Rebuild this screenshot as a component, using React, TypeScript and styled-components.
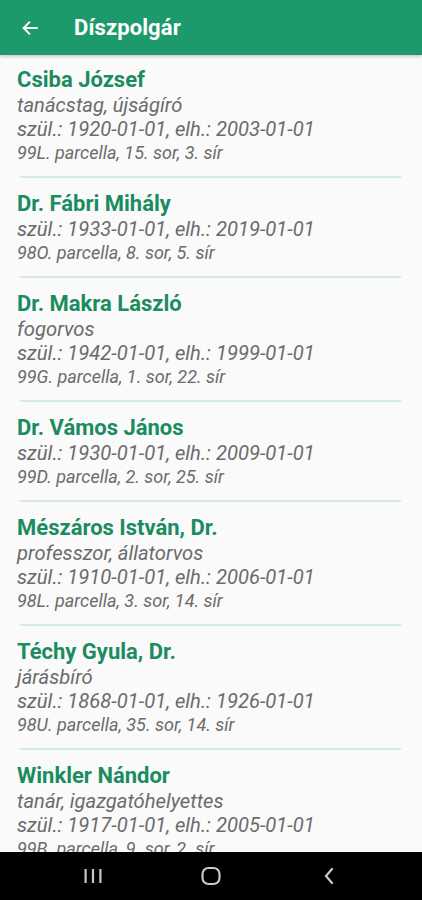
import React from "react";
import styled, { createGlobalStyle } from "styled-components";

const GlobalStyle = createGlobalStyle`
  html, body {
    margin: 0;
    padding: 0;
    background: #fafafa;
  }
  body {
    font-family: Roboto, "Liberation Sans", sans-serif;
  }
`;

const Screen = styled.div`
  width: 422px;
  height: 900px;
  display: flex;
  flex-direction: column;
  overflow: hidden;
  background: #fafafa;
`;

const AppBar = styled.header`
  height: 55px;
  flex: none;
  display: flex;
  align-items: center;
  background: #1d9a6c;
  box-shadow: 0 2px 3px rgba(0, 0, 0, 0.18);
  position: relative;
  z-index: 1;
`;

const BackButton = styled.div`
  width: 60px;
  display: flex;
  justify-content: center;
`;

const Title = styled.h1`
  margin: 0 0 0 14px;
  color: #ffffff;
  font-size: 22px;
  font-weight: 700;
  letter-spacing: 0.1px;
`;

const List = styled.div`
  flex: 1;
  overflow: hidden;
`;

const Item = styled.div<{ $first?: boolean }>`
  padding: ${(p) => (p.$first ? "12px" : "13px")} 17px 12px;
  display: flex;
  flex-direction: column;
`;

const Divider = styled.div`
  height: 2px;
  margin: 0 21px 0 20px;
  background: #d3ebe2;
`;

const Name = styled.div`
  color: #1b8c60;
  font-size: 22px;
  font-weight: 700;
  line-height: 26px;
  white-space: nowrap;
`;

const Line = styled.div<{ $small?: boolean }>`
  color: #6b6b6b;
  font-style: italic;
  font-size: ${(p) => (p.$small ? "18px" : "20.2px")};
  line-height: ${(p) => (p.$small ? "23px" : "24px")};
  white-space: nowrap;
`;

const NavBar = styled.nav`
  height: 48px;
  flex: none;
  background: #000;
  display: grid;
  grid-template-columns: repeat(3, 1fr);
  align-items: center;
  justify-items: center;
  padding: 0 34px;
`;

type Person = {
  name: string;
  role?: string;
  born: string;
  died: string;
  place: string;
};

const people: Person[] = [
  { name: "Csiba József", role: "tanácstag, újságíró", born: "1920-01-01", died: "2003-01-01", place: "99L. parcella, 15. sor, 3. sír" },
  { name: "Dr. Fábri Mihály", born: "1933-01-01", died: "2019-01-01", place: "98O. parcella, 8. sor, 5. sír" },
  { name: "Dr. Makra László", role: "fogorvos", born: "1942-01-01", died: "1999-01-01", place: "99G. parcella, 1. sor, 22. sír" },
  { name: "Dr. Vámos János", born: "1930-01-01", died: "2009-01-01", place: "99D. parcella, 2. sor, 25. sír" },
  { name: "Mészáros István, Dr.", role: "professzor, állatorvos", born: "1910-01-01", died: "2006-01-01", place: "98L. parcella, 3. sor, 14. sír" },
  { name: "Téchy Gyula, Dr.", role: "járásbíró", born: "1868-01-01", died: "1926-01-01", place: "98U. parcella, 35. sor, 14. sír" },
  { name: "Winkler Nándor", role: "tanár, igazgatóhelyettes", born: "1917-01-01", died: "2005-01-01", place: "99B. parcella, 9. sor, 2. sír" },
];

export default function App() {
  return (
    <Screen>
      <GlobalStyle />
      <AppBar>
        <BackButton>
          <svg width="18" height="18" viewBox="0 0 24 24" fill="none" stroke="#fff" strokeWidth="2.6" strokeLinecap="square">
            <path d="M21 12H4" />
            <path d="M11 4.5L3.5 12L11 19.5" />
          </svg>
        </BackButton>
        <Title>Díszpolgár</Title>
      </AppBar>
      <List>
        {people.map((p, i) => (
          <React.Fragment key={p.name}>
            {i > 0 && <Divider />}
            <Item $first={i === 0}>
              <Name>{p.name}</Name>
              {p.role && <Line>{p.role}</Line>}
              <Line>
                szül.: {p.born}, elh.: {p.died}
              </Line>
              <Line $small>{p.place}</Line>
            </Item>
          </React.Fragment>
        ))}
      </List>
      <NavBar>
        <svg width="20" height="20" viewBox="0 0 20 20" fill="#c8c8c8">
          <rect x="1.5" y="3" width="2.2" height="14" />
          <rect x="8.9" y="3" width="2.2" height="14" />
          <rect x="16.3" y="3" width="2.2" height="14" />
        </svg>
        <svg width="22" height="22" viewBox="0 0 22 22" fill="none" stroke="#c8c8c8" strokeWidth="2.2">
          <rect x="2.5" y="3" width="17" height="16" rx="6" />
        </svg>
        <svg width="20" height="20" viewBox="0 0 20 20" fill="none" stroke="#c8c8c8" strokeWidth="2.2" strokeLinecap="round">
          <path d="M13 3L7 10L13 17" />
        </svg>
      </NavBar>
    </Screen>
  );
}
